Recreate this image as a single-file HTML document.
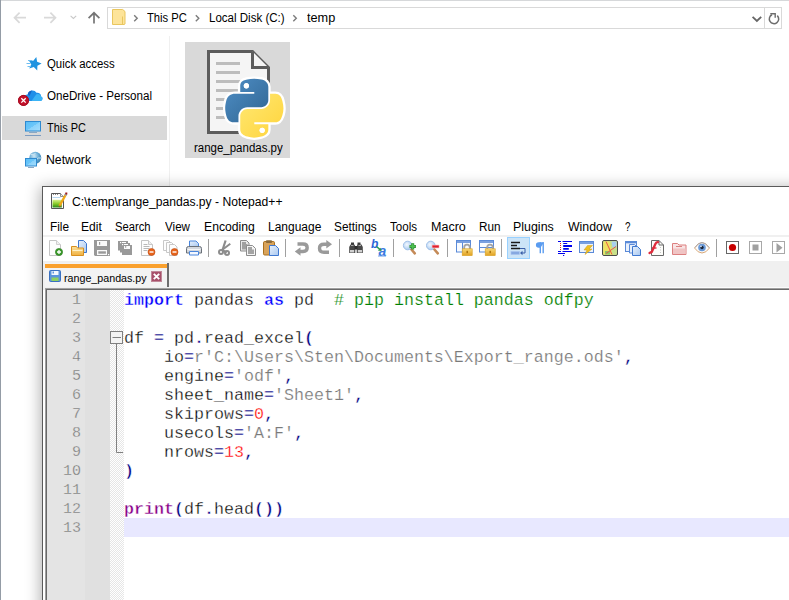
<!DOCTYPE html>
<html><head><meta charset="utf-8">
<style>
*{box-sizing:border-box;margin:0;padding:0}
html,body{width:789px;height:600px;overflow:hidden;background:#fff;font-family:"Liberation Sans",sans-serif;font-size:12px;color:#000}
.a{position:absolute}
.t{position:absolute;white-space:nowrap;transform-origin:0 50%;line-height:16px;height:16px}
#topline{left:0;top:0;width:789px;height:1px;background:#d6d8da}
#leftedge{left:0;top:0;width:1px;height:600px;background:#949ca6}
#addr{left:107px;top:7px;width:658px;height:22px;border:1px solid #d9d9d9;background:#fff}
#refresh{left:764px;top:7px;width:18px;height:22px;border:1px solid #d9d9d9;background:#fff}
#navsel{left:2px;top:116px;width:165px;height:24px;background:#d9d9d9}
#navdiv{left:169px;top:36px;width:1px;height:150px;background:#f0f0f0}
#filesel{left:185px;top:42px;width:105px;height:116px;background:#d9d9d9}
/* notepad++ window */
#shadow{left:43px;top:188px;width:760px;height:430px;box-shadow:0 2px 14px 3px rgba(0,0,0,.30);background:#fff}
#npp{left:42px;top:186px;width:760px;height:430px;border:1px solid #5a5a5a;background:#fff;overflow:hidden}
#tbline1{left:43px;top:235px;width:746px;height:2px;background:#f0f0f0}
#tabbar{left:43px;top:261px;width:746px;height:29px;background:#f0f0f0}
#tab{left:45px;top:263px;width:124px;height:24px;background:#f3f3f3;border-right:2px solid #6e6e6e}
#tabtop{left:45px;top:264px;width:122px;height:4px;background:#faa12e}
#edborder{left:45px;top:288px;width:760px;height:320px;border-left:1px solid #a0a0a0;border-top:1px solid #a0a0a0;background:#fff}
#edborder2{left:46px;top:289px;width:760px;height:320px;border-left:1px solid #696969;border-top:1px solid #696969;background:#fff}
#lnm{left:47px;top:290px;width:38px;height:310px;background:#e4e4e4}
#bkm{left:85px;top:290px;width:25px;height:310px;background:#e0e0e0}
#fdm{left:110px;top:290px;width:14px;height:310px;background:conic-gradient(#e6e6e6 25%,#fff 0 50%,#e6e6e6 0 75%,#fff 0) 0 0/2px 2px}
#curline{left:124px;top:518px;width:665px;height:19px;background:#e8e8ff}
.ln{position:absolute;left:46px;width:35px;margin-top:1px;text-align:right;font-family:"Liberation Mono",monospace;font-size:15px;color:#777;-webkit-text-stroke:.3px #e4e4e4;line-height:19px;height:19px}
.c{position:absolute;left:124px;margin-top:.6px;white-space:pre;font-family:"Liberation Mono",monospace;font-size:16.667px;line-height:19px;height:19px;color:#000;-webkit-text-stroke:.3px #fff}
.kw{color:#0000ff;font-weight:bold;-webkit-text-stroke:.4px #fff}
.cm{color:#008000;-webkit-text-stroke:.2px #fff}
.st{color:#7a7a7a;-webkit-text-stroke:.2px #fff}
.nu{color:#ff0000}
.op{color:#000080;font-weight:bold;-webkit-text-stroke:.45px #fff}
.bi{color:#880088;font-weight:bold;-webkit-text-stroke:.4px #fff}
</style></head><body>
<div class="a" id="topline"></div>
<div class="a" id="leftedge"></div>
<div class="a" id="addr"></div>
<div class="a" id="refresh"></div>
<div class="a" id="navsel"></div>
<div class="a" id="navdiv"></div>
<div class="a" id="filesel"></div>


<!-- explorer nav icons -->
<svg class="a" style="left:0;top:0" width="789" height="36" viewBox="0 0 789 36">
 <g fill="none" stroke="#d9d9d9" stroke-width="1.700">
  <path d="M26 17.7H14.6M19.6 12.6L14.5 17.7L19.6 22.8"/>
  <path d="M44 17.7H55.4M50.4 12.6L55.5 17.7L50.4 22.8"/>
 </g>
 <path d="M70.6 15.8L73.4 18.5L76.2 15.8" fill="none" stroke="#c8c8c8" stroke-width="1.1"/>
 <path d="M94 23.6V12.8M88.6 18.2L94 12.8L99.4 18.2" fill="none" stroke="#757575" stroke-width="1.700"/>
 <!-- folder icon -->
 <path d="M112.5 9.5h10.2l2.3 2v12.5l-.8.5h-11.7z" fill="#fde49a" stroke="#e9c65f" stroke-width="1"/>
 <path d="M122.5 16.5v8" stroke="#e9c65f" stroke-width="1" fill="none"/>
 <!-- breadcrumb chevrons -->
 <g fill="none" stroke="#7c7c7c" stroke-width="1.400">
  <path d="M134.200 15.200L137.200 18.200L134.200 21.200"/>
  <path d="M195.8 15.2L198.8 18.2L195.8 21.2"/>
  <path d="M293.3 15.2L296.3 18.2L293.3 21.2"/>
 </g>
 <path d="M752.600 16.800L756.900 21L761.200 16.800" fill="none" stroke="#666" stroke-width="1.800"/>
 <path d="M772 14.700A4.700 4.700 0 1 0 777.300 15.600" fill="none" stroke="#6d6d6d" stroke-width="1.500"/>
 <path d="M770.300 13.700H775.200V17.800" fill="none" stroke="#6d6d6d" stroke-width="1.400"/>
</svg>
<!-- sidebar icons -->
<svg class="a" style="left:0;top:50px" width="60" height="125" viewBox="0 50 60 125">
 <!-- quick access star -->
 <path d="M36.29 57.11L37.13 61.78L41.58 63.41L37.40 65.65L37.22 70.39L33.80 67.10L29.24 68.40L31.31 64.13L28.66 60.19L33.36 60.84Z" fill="#1f93e0"/>
 <path d="M28 60.500h4M26.500 63.500h4M27.500 66.500h3.500" stroke="#6dbdf0" stroke-width="1" fill="none"/>
 <!-- onedrive cloud -->
 <path d="M28 101a3.300 3.300 0 0 1-.3-6.600 4.800 4.800 0 0 1 8.800-1.600 3.600 3.600 0 0 1 4.600 3.600 2.400 2.400 0 0 1-.9 4.600z" fill="#1f8fe8"/>
 <path d="M31.500 101l4.800-6.800a3.600 3.600 0 0 1 4.800 2.200 2.400 2.400 0 0 1-.9 4.600z" fill="#3cb4f5"/>
 <path d="M27.700 94.400a4.800 4.800 0 0 1 4.300-4l-2.500 5.600z" fill="#1565c8"/>
 <circle cx="23.500" cy="100.400" r="5.500" fill="#c4122b"/>
 <circle cx="23.500" cy="100.400" r="5" fill="none" stroke="#a30d22" stroke-width="1"/>
 <path d="M21.300 98.200l4.400 4.400M25.700 98.200l-4.400 4.400" stroke="#fff" stroke-width="1.300"/>
 <!-- this pc -->
 <defs><linearGradient id="mon" x1="0" y1="0" x2="1" y2="1"><stop offset="0" stop-color="#57bdf7"/><stop offset=".5" stop-color="#6cc6f9"/><stop offset=".51" stop-color="#8ad2fb"/><stop offset="1" stop-color="#a5ddfc"/></linearGradient>
 <radialGradient id="glb" cx=".4" cy=".35" r=".7"><stop offset="0" stop-color="#cfe8f5"/><stop offset=".5" stop-color="#6fb0d8"/><stop offset="1" stop-color="#2e78aa"/></radialGradient></defs>
 <rect x="25.500" y="121.500" width="15" height="9.500" fill="url(#mon)" stroke="#2f8ad0" stroke-width="1"/>
 <path d="M29 132.500h8" stroke="#8aa8c4" stroke-width="1"/>
 <path d="M25 135.500h16" stroke="#7d9cc0" stroke-width="1"/>
 <!-- network -->
 <circle cx="35.300" cy="157.800" r="6" fill="url(#glb)"/>
 <path d="M31 154.500q3 1.500 4.500-1.500M36 160q2-3 5-2" stroke="#d8eef8" stroke-width="1" fill="none" opacity=".8"/>
 <rect x="25.500" y="158.500" width="11" height="7.500" fill="url(#mon)" stroke="#2f8ad0" stroke-width="1"/>
 <path d="M28 167.500h6" stroke="#8aa8c4" stroke-width="1"/>
</svg>
<span class="t" id="bc1" style="left:146.76px;top:10px;transform:scaleX(0.9346)">This PC</span>
<span class="t" id="bc2" style="left:208.54px;top:10px;transform:scaleX(0.9610)">Local Disk (C:)</span>
<span class="t" id="bc3" style="left:307.24px;top:10px;transform:scaleX(1.0596)">temp</span>
<span class="t" id="sb1" style="left:46.53px;top:56px;transform:scaleX(0.9481)">Quick access</span>
<span class="t" id="sb2" style="left:46.52px;top:88px;transform:scaleX(0.9659)">OneDrive - Personal</span>
<span class="t" id="sb3" style="left:47.03px;top:120px;transform:scaleX(0.9090)">This PC</span>
<span class="t" id="sb4" style="left:45.73px;top:152px;transform:scaleX(1.0233)">Network</span>

<!-- python file icon -->
<svg class="a" style="left:200px;top:45px" width="90" height="100" viewBox="200 45 90 100">
 <defs>
  <linearGradient id="pyb" x1="0" y1="0" x2="1" y2="1"><stop offset="0" stop-color="#4f8fc6"/><stop offset="1" stop-color="#2f6491"/></linearGradient>
  <linearGradient id="pyy" x1="0" y1="0" x2="1" y2="1"><stop offset="0" stop-color="#ffe873"/><stop offset="1" stop-color="#ffd43b"/></linearGradient>
 </defs>
 <path d="M208.500 51.500H252.500L268.500 67.500V132.500H208.500Z" fill="#f5f5f5"/><path d="M260 132.500H208.500V51.500H252.500L268.500 67.500V124" fill="none" stroke="#5c5c5c" stroke-width="3" stroke-linejoin="miter"/>
 <path d="M252.500 51.500V67.500H268.500" fill="#f5f5f5" stroke="#5c5c5c" stroke-width="3"/>
 <g fill="#bdbdbd">
  <rect x="216" y="62" width="24" height="3"/><rect x="216" y="71" width="24" height="3"/><rect x="216" y="80" width="24" height="3"/>
  <rect x="216" y="89" width="24" height="3"/><rect x="216" y="98" width="24" height="3"/><rect x="216" y="107" width="24" height="3"/><rect x="216" y="116" width="24" height="3"/>
 </g>
 <g transform="translate(225.200 78.800) scale(0.5240)">
  <g stroke="#fff" stroke-width="9" stroke-linejoin="round" fill="#fff">
   <path d="M54.900 0C50.300 0 46 .4 42.100 1.100 30.800 3.100 28.700 7.300 28.700 15v10.300h26.800v3.400H18.600c-7.800 0-14.600 4.700-16.700 13.600-2.500 10.200-2.600 16.600 0 27.200 1.900 8 6.400 13.600 14.200 13.600h9.200V70.800c0-8.800 7.700-16.600 16.800-16.600h26.800c7.400 0 13.400-6.100 13.400-13.600V15c0-7.300-6.100-12.700-13.400-13.900C64.300.3 59.500 0 54.900 0z"/>
   <path d="M85.600 28.700v11.900c0 9.200-7.800 17-16.700 17H42.100c-7.300 0-13.400 6.300-13.400 13.600v25.500c0 7.300 6.300 11.500 13.400 13.600 8.500 2.500 16.600 2.900 26.800 0 6.800-2 13.400-5.900 13.400-13.600V86.500H55.500v-3.400h40.200c7.800 0 10.700-5.400 13.400-13.600 2.800-8.400 2.700-16.500 0-27.200-1.900-7.800-5.600-13.600-13.400-13.600H85.600z"/>
  </g>
  <path fill="url(#pyb)" d="M54.900 0C50.300 0 46 .4 42.100 1.100 30.800 3.100 28.700 7.300 28.700 15v10.300h26.800v3.400H18.600c-7.800 0-14.600 4.700-16.700 13.600-2.500 10.200-2.600 16.600 0 27.200 1.900 8 6.400 13.600 14.200 13.600h9.200V70.800c0-8.800 7.700-16.600 16.800-16.600h26.800c7.400 0 13.400-6.100 13.400-13.600V15c0-7.300-6.100-12.700-13.400-13.900C64.300.3 59.500 0 54.900 0zM40.400 8.200c2.800 0 5 2.300 5 5.100s-2.300 5.100-5 5.100c-2.800 0-5-2.300-5-5.100s2.200-5.100 5-5.100z"/>
  <path fill="url(#pyy)" d="M85.600 28.700v11.900c0 9.200-7.800 17-16.700 17H42.100c-7.300 0-13.400 6.300-13.400 13.600v25.500c0 7.300 6.300 11.500 13.400 13.600 8.500 2.500 16.600 2.900 26.800 0 6.800-2 13.400-5.900 13.400-13.600V86.500H55.500v-3.400h40.200c7.800 0 10.700-5.400 13.400-13.600 2.800-8.400 2.700-16.500 0-27.200-1.900-7.800-5.600-13.600-13.400-13.600H85.600zM70.600 93.300c2.800 0 5 2.300 5 5.100s-2.300 5.100-5 5.100c-2.800 0-5-2.300-5-5.100s2.200-5.100 5-5.100z"/>
  <circle cx="40.400" cy="13.300" r="5" fill="#fff"/><circle cx="70.600" cy="98.400" r="5" fill="#fff"/>
 </g>
</svg>
<span class="t" id="fl" style="left:193.53px;top:140px;transform:scaleX(0.9565)">range_pandas.py</span>

<div class="a" id="shadow"></div>
<div class="a" id="npp"></div>
<span class="t" id="ttl" style="left:71.74px;top:194px;transform:scaleX(1.0116)">C:\temp\range_pandas.py - Notepad++</span>
<span class="t" id="m1" style="left:49.76px;top:219px;transform:scaleX(0.9863)">File</span>
<span class="t" id="m2" style="left:81.00px;top:219px;transform:scaleX(1.0050)">Edit</span>
<span class="t" id="m3" style="left:115.30px;top:219px;transform:scaleX(0.9343)">Search</span>
<span class="t" id="m4" style="left:164.75px;top:219px;transform:scaleX(0.9690)">View</span>
<span class="t" id="m5" style="left:203.98px;top:219px;transform:scaleX(1.0155)">Encoding</span>
<span class="t" id="m6" style="left:267.75px;top:219px;transform:scaleX(0.9981)">Language</span>
<span class="t" id="m7" style="left:334.01px;top:219px;transform:scaleX(0.9846)">Settings</span>
<span class="t" id="m8" style="left:390.26px;top:219px;transform:scaleX(0.9651)">Tools</span>
<span class="t" id="m9" style="left:430.96px;top:219px;transform:scaleX(1.0438)">Macro</span>
<span class="t" id="m10" style="left:478.53px;top:219px;transform:scaleX(0.9778)">Run</span>
<span class="t" id="m11" style="left:513.22px;top:219px;transform:scaleX(1.0355)">Plugins</span>
<span class="t" id="m12" style="left:567.50px;top:219px;transform:scaleX(1.0259)">Window</span>
<span class="t" id="m13" style="left:624.61px;top:219px;transform:scaleX(0.8182)">?</span>
<div class="a" id="tbline1"></div>
<!-- toolbar -->
<div class="a" style="left:507px;top:237px;width:23px;height:22px;background:#cce4f7;border:1px solid #99d1ff"></div>
<svg class="a" style="left:43px;top:237px" width="746" height="24" viewBox="43 237 746 24">
 <defs>
  <linearGradient id="gfold" x1="0" y1="0" x2="0" y2="1"><stop offset="0" stop-color="#fbe3a0"/><stop offset="1" stop-color="#f0b040"/></linearGradient>
  <linearGradient id="gblue" x1="0" y1="0" x2="1" y2="1"><stop offset="0" stop-color="#e8f1fc"/><stop offset="1" stop-color="#a9c8f0"/></linearGradient>
  <linearGradient id="glock" x1="0" y1="0" x2="0" y2="1"><stop offset="0" stop-color="#f9d877"/><stop offset="1" stop-color="#e0a020"/></linearGradient>
  <radialGradient id="glens" cx=".4" cy=".4" r=".7"><stop offset="0" stop-color="#f4f9ff"/><stop offset="1" stop-color="#9cc3ee"/></radialGradient>
 </defs>
 <g stroke="#a0a0a0" stroke-width="1">
  <path d="M208.500 239v18M285.500 239v18M339.500 239v18M393.500 239v18M447.500 239v18M501.500 239v18M716.500 239v18"/>
 </g>
 <!-- 1 new -->
 <g transform="translate(48 240)">
  <path d="M1.500 .5h7l4 4v11h-11z" fill="#fdfdfd" stroke="#c4c4c4"/>
  <path d="M8.500 .5v4h4" fill="#f0f0f0" stroke="#d0d0d0"/>
  <circle cx="11" cy="12" r="3.600" fill="#3a9a2a" stroke="#2a7a1c" stroke-width=".6"/>
  <path d="M11 10v4M9 12h4" stroke="#fff" stroke-width="1.300"/>
 </g>
 <!-- 2 open -->
 <g transform="translate(71 240)">
  <path d="M7.500 .5h5l3 3v9h-8z" fill="url(#gblue)" stroke="#3f78d0"/>
  <path d="M.5 6.500h5l1 1.500h6v7.500h-12z" fill="url(#gfold)" stroke="#d89020"/>
  <path d="M1.500 10.500h10" stroke="#fff2c8" stroke-width="1"/>
 </g>
 <!-- 3 save (grey) -->
 <g transform="translate(94 240)">
  <path d="M0 0h16v16h-15l-1-1z" fill="#999"/>
  <rect x="3" y="1" width="10" height="5" fill="#fafafa"/>
  <rect x="5" y="2" width="1.200" height="2.800" fill="#999"/>
  <rect x="3" y="10" width="10" height="5" fill="#fafafa"/>
  <rect x="4.300" y="11.300" width="7.600" height="2.400" fill="#999"/>
  <rect x="14" y="14" width="1.200" height="1.200" fill="#fff"/>
 </g>
 <!-- 4 save all (grey) -->
 <g>
  <rect x="118" y="241" width="10" height="9.500" fill="#999"/>
  <rect x="120" y="243" width="10" height="9.500" fill="#999"/>
  <rect x="122" y="245" width="10" height="10" fill="#999"/>
  <rect x="120" y="242" width="1.200" height="1.200" fill="#fff"/>
  <rect x="122" y="242" width="4" height="1" fill="#fff"/>
  <rect x="122" y="244" width="1.200" height="1.200" fill="#fff"/>
  <rect x="124" y="244" width="4" height="1" fill="#fff"/>
  <rect x="124" y="246" width="6" height="3" fill="#fafafa"/>
  <rect x="125.200" y="246" width="1" height="1.800" fill="#999"/>
 </g>
 <!-- 5 close -->
 <g transform="translate(140 240)">
  <path d="M1.500 .5h7l4 4v11h-11z" fill="#fdfdfd" stroke="#c4c4c4"/>
  <path d="M8.500 .5v4h4" fill="#f0f0f0" stroke="#c8c8c8"/>
  <path d="M3.500 4.500h4M3.500 6.500h6M3.500 8.500h6M3.500 10.500h4" stroke="#b8b8b8" stroke-width="1"/>
  <circle cx="11.500" cy="12" r="3.500" fill="#e8641b" stroke="#c04a10" stroke-width=".6"/>
  <path d="M9.500 12h4" stroke="#fff" stroke-width="1.400"/>
 </g>
 <!-- 6 close all -->
 <g transform="translate(163 240)">
  <path d="M.5 .5h5l2 2v8h-7z" fill="#fdfdfd" stroke="#c8c8c8"/>
  <path d="M3.500 2.500h5l2 2v8h-7z" fill="#fdfdfd" stroke="#c8c8c8"/>
  <path d="M6.500 4.500h5l2.500 2.500v8.500h-7.500z" fill="#fdfdfd" stroke="#c8c8c8"/>
  <circle cx="11.500" cy="12" r="3.500" fill="#e8641b" stroke="#c04a10" stroke-width=".6"/>
  <path d="M9.500 12h4" stroke="#fff" stroke-width="1.400"/>
 </g>
 <!-- 7 print -->
 <g transform="translate(186 240)">
  <path d="M3.500 6.500v-5.500h6.500l2.500 2.500v3z" fill="url(#gblue)" stroke="#4a86dc"/>
  <path d="M.500 13v-4.500q0-2 2-2h11q2 0 2 2v4.500z" fill="#d4d8de" stroke="#6a7078"/>
  <path d="M1.500 9.500h13" stroke="#f6f6f6" stroke-width="1"/>
  <path d="M3.500 11.500h9v3.500h-9z" fill="#f4f8ff" stroke="#4a86dc"/>
 </g>
 <!-- 8 cut (grey) -->
 <g transform="translate(217 240)" fill="none" stroke="#8c8c8c">
  <path d="M8.600 .5l-3.400 10.500" stroke-width="2.200"/>
  <path d="M13.300 3.800l-8.300 6.200 4.800 2.500" stroke-width="2"/>
  <circle cx="4" cy="12" r="2" stroke-width="2"/>
  <circle cx="10" cy="13" r="2" stroke-width="2"/>
 </g>
 <!-- 9 copy (grey) -->
 <g transform="translate(240 240)">
  <path d="M.500 .500h6l2.500 2.500v8h-8.500z" fill="#e8e8e8" stroke="#8c8c8c"/>
  <path d="M2 2h4v2h1.500v5.500h-5.500z" fill="#a0a0a0"/>
  <path d="M6.500 5.500h6l3 3v7h-9z" fill="#f4f4f4" stroke="#8c8c8c"/>
  <path d="M8 7h4v2.500h2v4.500h-6z" fill="#a4a4a4"/>
 </g>
 <!-- 10 paste -->
 <g transform="translate(263 240)">
  <rect x=".500" y="1.500" width="11" height="13.500" rx="1.200" fill="#d9a35a" stroke="#a8701f"/>
  <rect x="3" y=".300" width="6" height="2.800" rx=".8" fill="#8a6a3a"/>
  <path d="M6.500 5.500h6l3 3v7h-9z" fill="url(#gblue)" stroke="#3f78d0"/>
 </g>
 <!-- 11 undo (grey) -->
 <g transform="translate(294 240)">
  <path d="M3.500 4h5.500q4.200 0 4.200 3.700t-4.200 3.800h-3" fill="none" stroke="#9a9a9a" stroke-width="3.400"/>
  <path d="M.800 11.500l5.700-4.300v8.600z" fill="#9a9a9a"/>
 </g>
 <!-- 12 redo (grey) -->
 <g transform="translate(317 240)">
  <path d="M12 12.300h-5q-4.500 0-4.500-4t4.500-4h3" fill="none" stroke="#9a9a9a" stroke-width="3.400"/>
  <path d="M15 4.300l-5.700-4.300v8.600z" fill="#9a9a9a"/>
 </g>
 <!-- 13 find (binoculars) -->
 <g transform="translate(348 240)">
  <path d="M3 2.500h3v2.500h-3zM9.500 2.500h3v2.500h-3z" fill="#3c3c3c"/>
  <path d="M1.200 7l1.300-2.500h4l.8 2v6.500h-6.100zM8.700 6.500l.8-2h4l1.300 2.500v6h-6.100z" fill="#484848"/>
  <rect x="6.500" y="6" width="3" height="3.500" fill="#2c2c2c"/>
  <rect x="2" y="10" width="4.200" height="2.500" fill="#d0d0d0"/><rect x="9.800" y="10" width="4.200" height="2.500" fill="#d0d0d0"/>
  <path d="M3 5.500h2.500M10.500 5.500h2.500" stroke="#a8a8a8" stroke-width="1"/>
 </g>
 <!-- 14 replace -->
 <g transform="translate(371 240)">
  <text x="0" y="8" font-family="Liberation Sans" font-style="italic" font-weight="bold" font-size="12" fill="#2a66d8">b</text>
  <text x="7.500" y="16" font-family="Liberation Sans" font-style="italic" font-weight="bold" font-size="14" fill="#3a7ae0">a</text>
  <path d="M5.500 6.500l3.500 3" stroke="#2a9a50" stroke-width="1.600"/>
  <path d="M10.500 11l-3.700-.5 2.700-2.700z" fill="#2a9a50"/>
  <path d="M7 16h8" stroke="#6aa0ea" stroke-width="1"/>
 </g>
 <!-- 15 zoom in -->
 <g>
  <path d="M411 249l3.800 4.300" stroke="#c48a58" stroke-width="2.600" stroke-linecap="round"/>
  <circle cx="407.700" cy="245.500" r="4.300" fill="url(#glens)" stroke="#9fbfe8" stroke-width="1"/>
  <path d="M412.700 243.200v6.400M409.500 246.400h6.400" stroke="#2f8a34" stroke-width="3"/>
  <path d="M412.700 243.800v5.200M410.100 246.400h5.200" stroke="#4cc050" stroke-width="1.600"/>
 </g>
 <!-- 16 zoom out -->
 <g>
  <path d="M434 249l3.800 4.300" stroke="#c48a58" stroke-width="2.600" stroke-linecap="round"/>
  <circle cx="430.800" cy="245.500" r="4.300" fill="url(#glens)" stroke="#9fbfe8" stroke-width="1"/>
  <rect x="431.800" y="244.800" width="7.600" height="3.400" rx=".8" fill="#f8c0c0"/>
  <rect x="432.400" y="245.400" width="6.400" height="2.200" fill="#e02030"/>
 </g>
 <!-- 17 sync v -->
 <g transform="translate(456 240)">
  <rect x=".500" y=".500" width="14" height="11.500" fill="#f8fbff" stroke="#5a8ad8"/>
  <path d="M.500 2h14" stroke="#5a8ad8" stroke-width="1.600"/>
  <path d="M6.500 2.500v9.500" stroke="#5a8ad8"/>
  <path d="M8.200 9.500v-2q0-2.800 2.800-2.800t2.800 2.800v2" fill="none" stroke="#a4a4a4" stroke-width="1.800"/>
  <rect x="6.200" y="8.800" width="10" height="6.800" fill="url(#glock)" stroke="#d8a020" stroke-width=".6"/>
  <rect x="10.500" y="10.800" width="1.400" height="2.400" fill="#a87008"/>
 </g>
 <!-- 18 sync h -->
 <g transform="translate(479 240)">
  <rect x=".500" y=".500" width="14" height="11.500" fill="#f8fbff" stroke="#5a8ad8"/>
  <path d="M.500 2h14" stroke="#5a8ad8" stroke-width="1.600"/>
  <path d="M.500 7.500h14" stroke="#5a8ad8"/>
  <path d="M8.200 9.500v-2q0-2.800 2.800-2.800t2.800 2.800v2" fill="none" stroke="#a4a4a4" stroke-width="1.800"/>
  <rect x="6.200" y="8.800" width="10" height="6.800" fill="url(#glock)" stroke="#d8a020" stroke-width=".6"/>
  <rect x="10.500" y="10.800" width="1.400" height="2.400" fill="#a87008"/>
 </g>
 <!-- 19 word wrap -->
 <g transform="translate(510 240)">
  <path d="M1 2.500h9M1 5.500h6M1 8.500h9" stroke="#1a1a1a" stroke-width="1.300"/>
  <path d="M10 8.500h5v4.500h-3" fill="none" stroke="#3a5fa8" stroke-width="1"/>
  <path d="M12.500 10.800l-2.500 2.200 2.500 2.200z" fill="#3a5fa8"/>
  <rect x="1" y="11.500" width="8.500" height="3" fill="#86a8e0" stroke="#a8c4f0" stroke-width=".6"/>
 </g>
 <!-- 20 pilcrow -->
 <g>
  <path d="M540.300 242.300v11M543.200 242.300v11" stroke="#5a9cf0" stroke-width="1.400"/>
  <path d="M544 242.200h-5.300a2.800 2.800 0 0 0 0 5.600h1.800z" fill="#5a9cf0"/>
 </g>
 <!-- 21 indent guide -->
 <g>
  <path d="M560.500 243v7.500" stroke="#e02020" stroke-width="1" stroke-dasharray="1 1"/>
  <path d="M558 241.500h3M562.500 241.500h9.500M563.200 243.500h4M558 251.500h3M562.500 251.500h9.500M558 253.500h7M563 255.500h1.200" stroke="#0000ee" stroke-width="1.200"/>
  <path d="M563.200 246h8.800M563.200 248.800h5.600" stroke="#0000ee" stroke-width="1.800"/>
 </g>
 <!-- 22 udl -->
 <g transform="translate(579 240)">
  <rect x=".500" y="1.500" width="14" height="11" fill="#eef4fc" stroke="#5a8ad8"/>
  <path d="M.500 3h14" stroke="#5a8ad8" stroke-width="1.600"/>
  <path d="M8.500 5.500h5l-3.500 3.500h3l-7 5.500 2-4.500h-3z" fill="#f0c020" stroke="#c89818" stroke-width=".5"/>
 </g>
 <!-- 23 doc map -->
 <g transform="translate(602 240)">
  <rect x=".500" y=".500" width="15" height="15" rx="1.500" fill="#c8e08a" stroke="#4a4a4a"/>
  <path d="M1.500 1.500h6l3 13h-9z" fill="#f0e060"/>
  <path d="M9.500 1.500h5v6h-4z" fill="#a8d0f0"/>
  <path d="M3 11h5v3.500h-5z" fill="#8ac86a"/>
  <path d="M4 1.500l6 13M14 6.500l-10 7" stroke="#e85a4a" stroke-width="1" fill="none"/>
 </g>
 <!-- 24 doc list -->
 <g transform="translate(625 240)">
  <rect x=".500" y="1.500" width="11" height="10" fill="#e8f0fc" stroke="#5a8ad8"/>
  <path d="M.500 2.500h11" stroke="#5a8ad8" stroke-width="1.600"/>
  <path d="M4.500 4.500h5l2.500 2.500v6h-7.500z" fill="#e8f0fc" stroke="#5a8ad8"/>
  <path d="M7.500 6.500h5l3 3v6h-8z" fill="url(#gblue)" stroke="#3f78d0"/>
 </g>
 <!-- 25 function list -->
 <g transform="translate(648 240)">
  <path d="M3.500 .500h7.500l4.500 4.500v10.500h-12z" fill="#fdfdfa" stroke="#6a6a6a"/>
  <path d="M11 .500v4.500h4.500" fill="none" stroke="#6a6a6a"/>
  <path d="M12.500 7v7" stroke="#c8c8c8" stroke-dasharray="1 1.500"/>
  <path d="M1.500 13l2.300-1.200 3.700-8q.9-1.800 2.500-1.600" fill="none" stroke="#e02c3c" stroke-width="2.300" stroke-linecap="round"/>
  <path d="M4 8h4.500" stroke="#e02c3c" stroke-width="1.400"/>
 </g>
 <!-- 26 folder as workspace -->
 <g transform="translate(671 240)">
  <path d="M1.500 3.500h5l1.500 1.500h7v9.500h-13.500z" fill="#f8e4e4" stroke="#dc8080"/>
  <path d="M2 8.500h12.500v5.500h-12.500z" fill="#f0c4c4"/>
  <path d="M5 6.500h6" stroke="#dc8080"/>
 </g>
 <!-- 27 monitoring eye -->
 <g transform="translate(694 240)">
  <path d="M.500 8q3.500-5.500 7.500-5.500t7.500 5.500q-3.500 5-7.500 5t-7.500-5z" fill="#fbfbfb" stroke="#d8a878" stroke-width="1"/>
  <path d="M1 7.500q3.500-5 7-5t7 5" fill="none" stroke="#a8a8b0" stroke-width="1"/>
  <circle cx="8" cy="7.500" r="3.800" fill="#6a9ad8"/>
  <circle cx="8" cy="7.500" r="1.700" fill="#1a2438"/>
  <circle cx="7" cy="6.400" r=".8" fill="#e8f0ff"/>
 </g>
 <!-- macro buttons -->
 <rect x="726.500" y="241.500" width="12" height="12" fill="#fff" stroke="#666"/>
 <circle cx="732.500" cy="247.500" r="3.600" fill="#c80000"/>
 <rect x="749.500" y="241.500" width="12" height="12" fill="#fff" stroke="#a8a8a8"/>
 <rect x="752.500" y="244.500" width="6" height="6" fill="#a0a0a0"/>
 <rect x="772.500" y="241.500" width="12" height="12" fill="#fff" stroke="#a8a8a8"/>
 <path d="M776.500 243v9.400l6-4.700z" fill="#a0a0a0"/>
</svg>

<div class="a" id="tabbar"></div>
<div class="a" id="tab"></div>
<div class="a" id="tabtop"></div><div class="a" style="left:169px;top:287px;width:620px;height:1px;background:#fbfbfb"></div>
<span class="t" id="tabt" style="margin-top:-.5px;left:64.27px;top:270px;font-size:11px;transform:scaleX(0.9720)">range_pandas.py</span>
<div class="a" id="edborder"></div>
<div class="a" id="edborder2"></div>
<div class="a" id="lnm"></div>
<div class="a" id="bkm"></div>
<div class="a" id="fdm"></div>
<div class="a" id="curline"></div>

<!-- title icon -->
<svg class="a" style="left:50px;top:191px" width="20" height="20" viewBox="50 191 20 20">
 <defs><linearGradient id="ggrn" x1="0" y1="0" x2="0" y2="1"><stop offset="0" stop-color="#d8f08a"/><stop offset=".5" stop-color="#8acc2a"/><stop offset="1" stop-color="#2a8a18"/></linearGradient></defs>
 <path d="M51.500 193.500h9l3 3v12h-12z" fill="#fff" stroke="#555"/>
 <path d="M60.500 193.500v3h3" fill="#eee" stroke="#777" stroke-width=".8"/>
 <path d="M53 194.500h1M55 194.500h1M57 194.500h1" stroke="#888" stroke-width="1"/>
 <path d="M52.500 197.500h8" stroke="#b8d8f0" stroke-width="1"/>
 <rect x="52.500" y="199.800" width="9.300" height="7.700" fill="url(#ggrn)"/>
 <path d="M65.800 194.500l-6.300 11.500" stroke="#f0a818" stroke-width="2.400"/>
 <path d="M59.800 205.300l-.9 2.300 2.200-1.300z" fill="#8a5a28"/>
 <path d="M65.300 195.300l.9-1.600" stroke="#9ab0c8" stroke-width="2.400"/>
 <rect x="65.300" y="192.500" width="2" height="2" fill="#a01818"/>
</svg>
<!-- tab icon + close -->
<svg class="a" style="left:48px;top:268px" width="120" height="18" viewBox="48 268 120 18">
 <rect x="49.500" y="270.500" width="11" height="11" rx="1" fill="#5a94dc" stroke="#3a70c0"/>
 <rect x="51.500" y="271" width="7" height="4" fill="#f4f8ff"/>
 <rect x="52.500" y="271.500" width="1.500" height="2" fill="#5a94dc"/>
 <rect x="51.500" y="277.500" width="7" height="3.500" fill="#8ed060"/>
 <rect x="151.500" y="271.500" width="10" height="10" fill="#a8506a" stroke="#c08898" stroke-width="1"/>
 <path d="M153.800 273.800l5.400 5.400M159.200 273.800l-5.400 5.400" stroke="#fff" stroke-width="1.900"/>
</svg>
<!-- fold markers -->
<svg class="a" style="left:110px;top:328px" width="14" height="135" viewBox="110 328 14 135">
 <rect x="110.500" y="331.500" width="12" height="12" fill="#f4f4f4" stroke="#808080"/>
 <path d="M112.500 337.500h8.500" stroke="#808080"/>
 <path d="M116.500 344v108.500h6.500" fill="none" stroke="#808080"/>
</svg>

<div id="code">
<div class="c" style="top:290px"><span class="kw">import</span> pandas <span class="kw">as</span> pd  <span class="cm"># pip install pandas odfpy</span></div>
<div class="c" style="top:328px">df <span class="op">=</span> pd<span class="op">.</span>read_excel<span class="op">(</span></div>
<div class="c" style="top:347px">    io<span class="op">=</span><span class="st">r'C:\Users\Sten\Documents\Export_range.ods'</span><span class="op">,</span></div>
<div class="c" style="top:366px">    engine<span class="op">=</span><span class="st">'odf'</span><span class="op">,</span></div>
<div class="c" style="top:385px">    sheet_name<span class="op">=</span><span class="st">'Sheet1'</span><span class="op">,</span></div>
<div class="c" style="top:404px">    skiprows<span class="op">=</span><span class="nu">0</span><span class="op">,</span></div>
<div class="c" style="top:423px">    usecols<span class="op">=</span><span class="st">'A:F'</span><span class="op">,</span></div>
<div class="c" style="top:442px">    nrows<span class="op">=</span><span class="nu">13</span><span class="op">,</span></div>
<div class="c" style="top:461px"><span class="op">)</span></div>
<div class="c" style="top:499px"><span class="bi">print</span><span class="op">(</span>df<span class="op">.</span>head<span class="op">())</span></div>
</div>
<div class="ln" style="top:290px">1</div>
<div class="ln" style="top:309px">2</div>
<div class="ln" style="top:328px">3</div>
<div class="ln" style="top:347px">4</div>
<div class="ln" style="top:366px">5</div>
<div class="ln" style="top:385px">6</div>
<div class="ln" style="top:404px">7</div>
<div class="ln" style="top:423px">8</div>
<div class="ln" style="top:442px">9</div>
<div class="ln" style="top:461px">10</div>
<div class="ln" style="top:480px">11</div>
<div class="ln" style="top:499px">12</div>
<div class="ln" style="top:518px">13</div>
</body></html>
